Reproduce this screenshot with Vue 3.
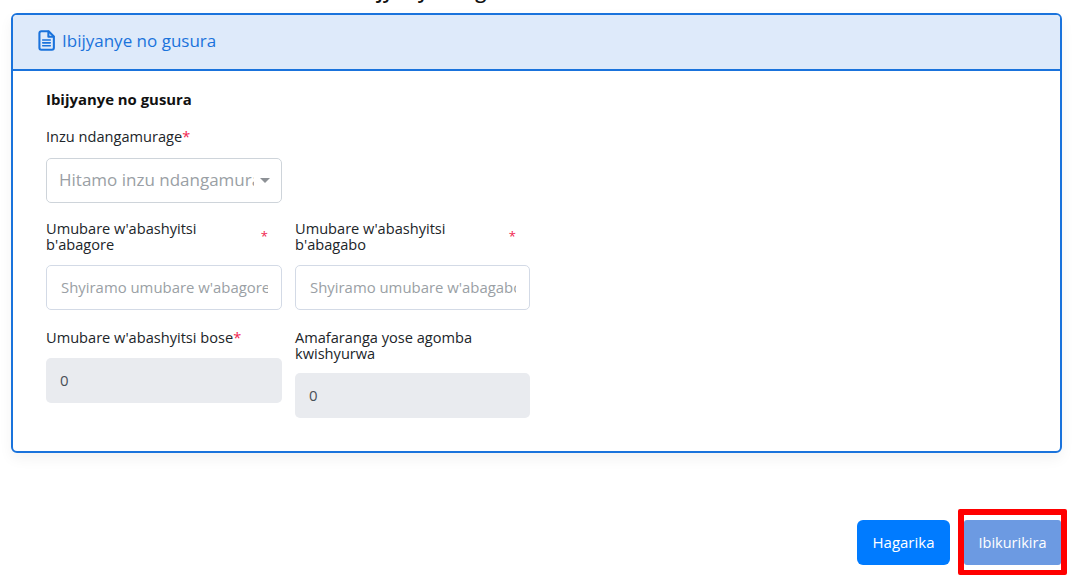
<script setup>
const row2 = [
  { label: "Umubare w'abashyitsi b'abagore", ph: "Shyiramo umubare w'abagore" },
  { label: "Umubare w'abashyitsi b'abagabo", ph: "Shyiramo umubare w'abagabo" },
]
</script>

<template>
  <div class="page">
    <div class="clip"><div class="title">Uzuza ibijyanye no gusura</div></div>
    <section class="card">
      <header class="card-head">
        <svg class="doc" viewBox="0 0 18 22" width="17" height="21" fill="none" stroke="currentColor" stroke-width="2.200" stroke-linejoin="round" stroke-linecap="round">
          <path d="M3.5 1.2h7.7l5.6 5.6v12a2 2 0 0 1-2 2H3.5a2 2 0 0 1-2-2v-15.600a2 2 0 0 1 2-2z" />
          <path d="M11 1.500v5.500h5.500" />
          <path d="M5 10.500h8M5 13.500h8M5 16.500h8" stroke-width="1.700" />
        </svg>
        <span>Ibijyanye no gusura</span>
      </header>
      <div class="card-body">
        <h4 class="section">Ibijyanye no gusura</h4>
        <div class="grid">
          <div class="field">
            <label class="lbl one">Inzu ndangamurage<i>*</i></label>
            <div class="select">
              <span class="sel-text">Hitamo inzu ndangamurage</span>
              <span class="caret"></span>
            </div>
          </div>
          <div></div>
          <div class="field" v-for="f in row2" :key="f.label">
            <label class="lbl two"><span class="lbl-text">{{ f.label }}</span><i class="star">*</i></label>
            <input class="input" :placeholder="f.ph" />
          </div>
          <div class="field last">
            <label class="lbl one">Umubare w'abashyitsi bose<i>*</i></label>
            <div class="readonly">0</div>
          </div>
          <div class="field last">
            <label class="lbl two"><span>Amafaranga yose agomba kwishyurwa</span></label>
            <div class="readonly">0</div>
          </div>
        </div>
      </div>
    </section>
    <footer class="actions">
      <button class="btn primary">Hagarika</button>
      <div class="mark"><button class="btn next">Ibikurikira</button></div>
    </footer>
  </div>
</template>

<style>
html, body { margin: 0; background: #fff; overflow: hidden; }
</style>

<style scoped>
.page {
  width: 1082px;
  height: 588px;
  overflow: hidden;
  font-family: "Open Sans", "Noto Sans", sans-serif;
  color: #212529;
  box-sizing: border-box;
}
.clip { height: 13px; overflow: hidden; }
.title {
  margin-top: -22px;
  text-align: center;
  font-size: 20px;
  line-height: 26px;
  font-weight: 600;
  color: #111;
  padding-right: 250px;
}
.card {
  margin: 0 20px 0 11px;
  height: 440px;
  box-sizing: border-box;
  border: 2px solid #1a73dc;
  border-radius: 6px;
  box-shadow: 0 6px 14px rgba(0, 0, 0, .05);
  overflow: hidden;
}
.card-head {
  height: 56px;
  box-sizing: border-box;
  background: #deeafa;
  border-bottom: 2px solid #1a73dc;
  color: #1a73dc;
  display: flex;
  align-items: center;
  gap: 7px;
  padding: 0 0 3px 25px;
  font-size: 17px;
}
.doc { flex: none; }
.card-body { padding: 18px 33px 0; }
.section {
  margin: 0 0 19px;
  font-size: 14.900px;
  line-height: 20px;
  font-weight: 700;
  color: #111;
}
.grid {
  display: grid;
  grid-template-columns: 236px 235px;
  column-gap: 13px;
  row-gap: 18px;
  align-items: start;
}
.field { min-width: 0; }
.last { margin-top: 1px; }
.lbl {
  display: flex;
  font-size: 14.600px;
  line-height: 16px;
  color: #212529;
}
.lbl i { color: #f0264f; font-style: normal; }
.lbl.one { margin-bottom: 14px; }
.lbl.two { margin: -1px 0 13px; align-items: center; padding-right: 14px; }
.last .lbl.one { margin-bottom: 13px; }
.last .lbl.two { margin: 0 0 12px; }
.lbl-text { flex: 1; max-width: 190px; margin-right: auto; }
.star { flex: none; font-size: 13px; }
.select, .input, .readonly {
  display: flex;
  width: 100%;
  height: 45px;
  box-sizing: border-box;
  border-radius: 5px;
  align-items: center;
  font-family: inherit;
}
.select {
  border: 1px solid #ced4da;
  padding: 0 11px 2px 12px;
  font-size: 17px;
  color: #9a9fa5;
  gap: 6px;
}
.sel-text { flex: 1; overflow: hidden; white-space: nowrap; }
.caret {
  flex: none;
  margin-top: 2px;
  border-left: 5.500px solid transparent;
  border-right: 5.500px solid transparent;
  border-top: 5px solid #8d9196;
}
.input {
  border: 1px solid #d3dae6;
  padding: 0 13px 2px 14px;
  font-size: 14.900px;
  outline: none;
  color: #495057;
  background: #fff;
}
.input::placeholder { color: #9a9fa5; opacity: 1; }
.readonly {
  background: #e9ebef;
  padding: 0 14px 2px;
  font-size: 15px;
  color: #495057;
}
.actions {
  display: flex;
  justify-content: flex-end;
  align-items: flex-start;
  gap: 8px;
  padding: 56px 15px 0 0;
}
.btn {
  height: 45px;
  border: 0;
  border-radius: 6px;
  color: #fff;
  font-family: inherit;
  font-size: 15px;
  padding: 0 0 1px;
}
.primary { width: 93px; background: #007bff; margin-top: 11px; }
.next { width: 97px; background: #6c9ae2; display: block; font-size: 14.500px; border-radius: 3px; }
.mark {
  border: 6px solid #f00;
  border-bottom-width: 5px;
  border-radius: 2px;
  padding: 5px 0;
}
</style>
